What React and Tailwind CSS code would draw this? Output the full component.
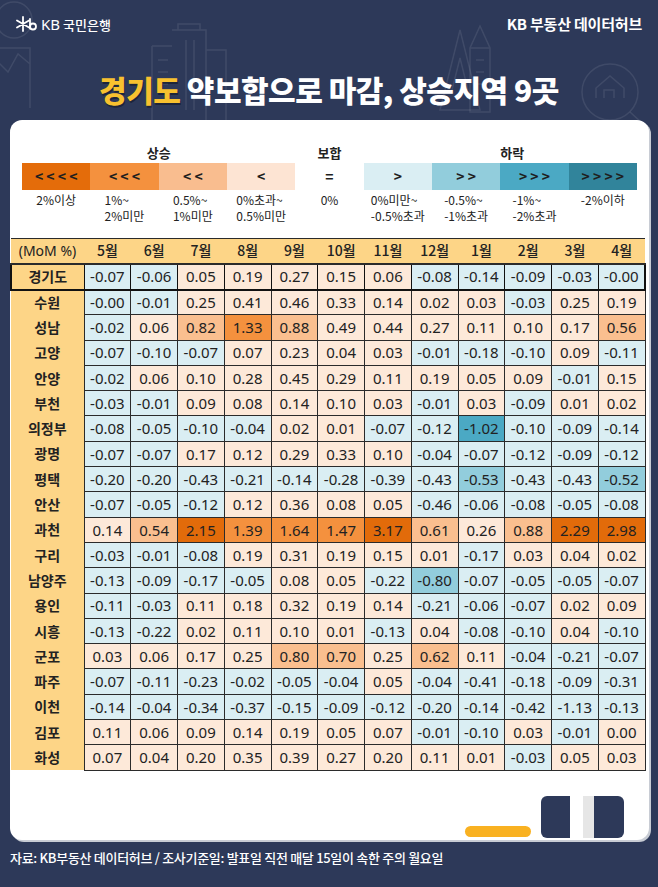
import React from "react";

const months = ["5월", "6월", "7월", "8월", "9월", "10월", "11월", "12월", "1월", "2월", "3월", "4월"];

const rows = [
  ["경기도", "-0.07 -0.06 0.05 0.19 0.27 0.15 0.06 -0.08 -0.14 -0.09 -0.03 -0.00"],
  ["수원", "-0.00 -0.01 0.25 0.41 0.46 0.33 0.14 0.02 0.03 -0.03 0.25 0.19"],
  ["성남", "-0.02 0.06 0.82 1.33 0.88 0.49 0.44 0.27 0.11 0.10 0.17 0.56"],
  ["고양", "-0.07 -0.10 -0.07 0.07 0.23 0.04 0.03 -0.01 -0.18 -0.10 0.09 -0.11"],
  ["안양", "-0.02 0.06 0.10 0.28 0.45 0.29 0.11 0.19 0.05 0.09 -0.01 0.15"],
  ["부천", "-0.03 -0.01 0.09 0.08 0.14 0.10 0.03 -0.01 0.03 -0.09 0.01 0.02"],
  ["의정부", "-0.08 -0.05 -0.10 -0.04 0.02 0.01 -0.07 -0.12 -1.02 -0.10 -0.09 -0.14"],
  ["광명", "-0.07 -0.07 0.17 0.12 0.29 0.33 0.10 -0.04 -0.07 -0.12 -0.09 -0.12"],
  ["평택", "-0.20 -0.20 -0.43 -0.21 -0.14 -0.28 -0.39 -0.43 -0.53 -0.43 -0.43 -0.52"],
  ["안산", "-0.07 -0.05 -0.12 0.12 0.36 0.08 0.05 -0.46 -0.06 -0.08 -0.05 -0.08"],
  ["과천", "0.14 0.54 2.15 1.39 1.64 1.47 3.17 0.61 0.26 0.88 2.29 2.98"],
  ["구리", "-0.03 -0.01 -0.08 0.19 0.31 0.19 0.15 0.01 -0.17 0.03 0.04 0.02"],
  ["남양주", "-0.13 -0.09 -0.17 -0.05 0.08 0.05 -0.22 -0.80 -0.07 -0.05 -0.05 -0.07"],
  ["용인", "-0.11 -0.03 0.11 0.18 0.32 0.19 0.14 -0.21 -0.06 -0.07 0.02 0.09"],
  ["시흥", "-0.13 -0.22 0.02 0.11 0.10 0.01 -0.13 0.04 -0.08 -0.10 0.04 -0.10"],
  ["군포", "0.03 0.06 0.17 0.25 0.80 0.70 0.25 0.62 0.11 -0.04 -0.21 -0.07"],
  ["파주", "-0.07 -0.11 -0.23 -0.02 -0.05 -0.04 0.05 -0.04 -0.41 -0.18 -0.09 -0.31"],
  ["이천", "-0.14 -0.04 -0.34 -0.37 -0.15 -0.09 -0.12 -0.20 -0.14 -0.42 -1.13 -0.13"],
  ["김포", "0.11 0.06 0.09 0.14 0.19 0.05 0.07 -0.01 -0.10 0.03 -0.01 0.00"],
  ["화성", "0.07 0.04 0.20 0.35 0.39 0.27 0.20 0.11 0.01 -0.03 0.05 0.03"],
];

const legend = [
  { sign: "< < < <", bg: "bg-[#e46c0a]", label: ["2%이상"] },
  { sign: "< < <", bg: "bg-[#f4913e]", label: ["1%~", "2%미만"] },
  { sign: "< <", bg: "bg-[#f9bd8f]", label: ["0.5%~", "1%미만"] },
  { sign: "<", bg: "bg-[#fde4d3]", label: ["0%초과~", "0.5%미만"] },
  { sign: "=", bg: "bg-white", label: ["0%"] },
  { sign: ">", bg: "bg-[#daeef3]", label: ["0%미만~", "-0.5%초과"] },
  { sign: "> >", bg: "bg-[#92cddc]", label: ["-0.5%~", "-1%초과"] },
  { sign: "> > >", bg: "bg-[#4ba9c4]", label: ["-1%~", "-2%초과"] },
  { sign: "> > > >", bg: "bg-[#31849b]", label: ["-2%이하"] },
];

// 이천 3월(-1.13)은 원본에서도 연한 색으로 칠해져 있음
function cellBg(s) {
  const v = parseFloat(s);
  if (!s.startsWith("-")) {
    if (v >= 2) return "bg-[#e26b0a]";
    if (v >= 1) return "bg-[#f4913e]";
    if (v >= 0.5) return "bg-[#fabf8f]";
    return "bg-[#fde9d9]";
  }
  if (s === "-1.13") return "bg-[#daeef3]";
  if (v <= -1) return "bg-[#4ba9c4]";
  if (v <= -0.5) return "bg-[#92cddc]";
  return "bg-[#daeef3]";
}

function KbLogo() {
  return (
    <div className="flex items-center gap-[3px] text-white">
      <svg width="22" height="16" viewBox="0 0 22 16" fill="none" stroke="white" strokeWidth="1.8" strokeLinecap="round">
        <path d="M7 1v14M1 4.5l12 7M1 11.5l12-7" />
        <path d="M14 3v9.5" />
        <circle cx="17" cy="10.5" r="3" />
      </svg>
      <span className="text-[15px] leading-none font-['Noto_Sans',sans-serif]">KB</span>
      <span className="text-[13px] leading-none font-medium">국민은행</span>
    </div>
  );
}

function HeaderArt() {
  return (
    <svg className="absolute left-0 top-0 pointer-events-none" width="658" height="130" viewBox="0 0 658 130" fill="none" stroke="#ffffff" strokeOpacity="0.09" strokeWidth="1.5">
      <circle cx="14" cy="20" r="18" />
      <path d="M-2 48h32v60M-2 62l10 10 10-18 12 10" />
      <path d="M172 30h34v90M178 30v-6h22v6M152 46h20M152 46v74M206 50h20v70M186 40v70M194 40v70M158 60h10M158 72h10M158 84h10" />
      <path d="M440 110l20-80 20 80z M452 90l8-32 8 32" />
      <path d="M470 112V48l10-22 10 22v64zM470 48h20M476 60h8M476 72h8M476 84h8" />
      <circle cx="610" cy="92" r="28" />
      <path d="M630 112l24 22M596 98v-10l14-12 14 12v10M604 98v-8h10v8" />
    </svg>
  );
}

export default function App() {
  return (
    <div className="relative w-[658px] h-[887px] overflow-hidden bg-[#2d3959] font-['Noto_Sans_CJK_KR','Noto_Sans',sans-serif]">
      <HeaderArt />
      <div className="relative flex items-center justify-between pl-[16px] pr-[16px] pt-[15px] h-[33px]">
        <KbLogo />
        <span className="text-white text-[15px] font-semibold tracking-[-0.2px]">KB 부동산 데이터허브</span>
      </div>
      <h1 className="relative mt-[38px] text-center text-[30px] leading-[36px] font-black text-white tracking-[-0.5px]">
        <span className="text-[#f8c12f] [text-shadow:1px_2px_0_rgba(0,0,0,0.35)]">경기도</span> 약보합으로 마감, 상승지역 9곳
      </h1>

      <div className="relative mx-[10px] mt-[13px] w-[639px] h-[720px] bg-white rounded-[12px] shadow-[2px_2px_0_0_#c8ccd4] flex flex-col">
        <div className="px-[12px] pt-[25px]">
          <div className="grid grid-cols-9 text-[13px] leading-[16px] font-bold text-[#222]">
            <div className="col-span-4 text-center">상승</div>
            <div className="text-center">보합</div>
            <div className="col-span-4 text-center pl-[24px]">하락</div>
          </div>
          <div className="mt-[2px] grid grid-cols-9">
            {legend.map((l) => (
              <div key={l.sign} className={`${l.bg} h-[27px] flex items-center justify-center text-[14px] font-bold text-[#1f1f1f]`}>
                {l.sign}
              </div>
            ))}
          </div>
          <div className="mt-[2px] grid grid-cols-9 text-[12px] leading-[16px] text-[#222]">
            {legend.map((l) => (
              <div key={l.sign} className="flex justify-center">
                <div className="text-left">
                  {l.label.map((t) => (
                    <div key={t}>{t}</div>
                  ))}
                </div>
              </div>
            ))}
          </div>
        </div>

        <table className="mt-[14px] w-[636px] table-fixed border-collapse text-[#222]">
          <colgroup>
            <col className="w-[73px]" />
            {months.map((m) => (
              <col key={m} />
            ))}
          </colgroup>
          <thead>
            <tr className="h-[25px] bg-[#fdd587]">
              <th className="p-0 font-normal text-[14px] border-t border-b-2 border-[#2b2b2b] font-['Noto_Sans','Noto_Sans_CJK_KR',sans-serif]">(MoM %)</th>
              {months.map((m) => (
                <th key={m} className="p-0 font-medium text-[14px] border-t border-b-2 border-[#2b2b2b]">
                  {m}
                </th>
              ))}
            </tr>
          </thead>
          <tbody>
            {rows.map(([name, vals], ri) => {
              const top = ri === 0;
              const values = vals.split(" ");
              return (
                <tr key={name} className={top ? "h-[26px]" : "h-[25.3px]"}>
                  <td
                    className={`p-0 bg-[#fdd587] text-center text-[14px] font-bold border-r border-[#2b2b2b] ${
                      top ? "border-2 border-[#111]" : ""
                    }`}
                  >
                    {name}
                  </td>
                  {values.map((v, ci) => (
                    <td
                      key={ci}
                      className={`p-0 text-center text-[15px] font-['Noto_Sans',sans-serif] ${cellBg(v)} ${
                        top ? "border-y-2 border-l border-[#111]" : "border border-[#2b2b2b]"
                      } ${top && ci === 11 ? "border-r-2" : ""}`}
                    >
                      {v}
                    </td>
                  ))}
                </tr>
              );
            })}
          </tbody>
        </table>

        <div className="mt-auto flex items-end justify-end pr-[25px] pb-[2px]">
          <div className="mb-[1px] w-[66px] h-[11px] rounded-full bg-[#f9b121]" />
          <div className="ml-[10px] w-[29px] h-[42px] rounded-l-[6px] bg-[#2d3959]" />
          <div className="ml-[13px] w-[11px] h-[42px] bg-[#e6e6e6]" />
          <div className="w-[30px] h-[42px] rounded-r-[6px] bg-[#2d3959]" />
        </div>
      </div>

      <p className="relative mt-[8px] pl-[10px] text-[13px] font-medium text-white tracking-[-0.3px]">
        자료: KB부동산 데이터허브 / 조사기준일: 발표일 직전 매달 15일이 속한 주의 월요일
      </p>
    </div>
  );
}
